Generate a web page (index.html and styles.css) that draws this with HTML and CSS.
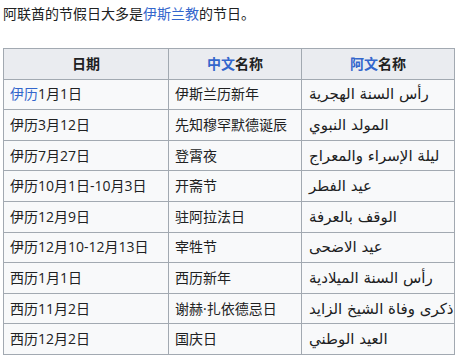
FILE: index.html
```html
<!DOCTYPE html>
<html lang="zh">
<head>
<meta charset="utf-8">
<title>阿联酋节假日</title>
<link rel="stylesheet" href="styles.css">
</head>
<body>
<p class="intro">阿联酋的节假日大多是<a href="#" class="link">伊斯兰教</a>的节日。</p>
<table class="holidays">
  <colgroup>
    <col class="c-date">
    <col class="c-zh">
    <col class="c-ar">
  </colgroup>
  <thead>
    <tr>
      <th>日期</th>
      <th><a href="#" class="link">中文</a>名称</th>
      <th><a href="#" class="link">阿文</a>名称</th>
    </tr>
  </thead>
  <tbody>
    <tr><td><a href="#" class="link">伊历</a>1月1日</td><td>伊斯兰历新年</td><td class="ar"><span class="ar-text" lang="ar" dir="rtl">رأس السنة الهجرية</span></td></tr>
    <tr><td>伊历3月12日</td><td>先知穆罕默德诞辰</td><td class="ar"><span class="ar-text" lang="ar" dir="rtl">المولد النبوي</span></td></tr>
    <tr><td>伊历7月27日</td><td>登霄夜</td><td class="ar"><span class="ar-text" lang="ar" dir="rtl">ليلة الإسراء والمعراج</span></td></tr>
    <tr><td>伊历10月1日-10月3日</td><td>开斋节</td><td class="ar"><span class="ar-text" lang="ar" dir="rtl">عيد الفطر</span></td></tr>
    <tr><td>伊历12月9日</td><td>驻阿拉法日</td><td class="ar"><span class="ar-text" lang="ar" dir="rtl">الوقف بالعرفة</span></td></tr>
    <tr><td>伊历12月10-12月13日</td><td>宰牲节</td><td class="ar"><span class="ar-text" lang="ar" dir="rtl">عيد الاضحى</span></td></tr>
    <tr><td>西历1月1日</td><td>西历新年</td><td class="ar"><span class="ar-text" lang="ar" dir="rtl">رأس السنة الميلادية</span></td></tr>
    <tr><td>西历11月2日</td><td>谢赫·扎依德忌日</td><td class="ar"><span class="ar-text" lang="ar" dir="rtl">ذكرى وفاة الشيخ الزايد</span></td></tr>
    <tr><td>西历12月2日</td><td>国庆日</td><td class="ar"><span class="ar-text" lang="ar" dir="rtl">العيد الوطني</span></td></tr>
  </tbody>
</table>
</body>
</html>
```

FILE: styles.css
```css
html, body {
  margin: 0;
  background: #ffffff;
}
body {
  padding: 3px 0 0 3px;
  font-family: "Open Sans", "Noto Sans CJK SC", "DejaVu Sans", sans-serif;
  font-size: 14px;
  color: #202122;
}
.intro {
  margin: 0;
  line-height: 22px;
}
.link {
  color: #3366cc;
  text-decoration: none;
}
.holidays {
  margin-top: 23px;
  border-collapse: collapse;
  table-layout: fixed;
  width: 451px;
  background: #f8f9fa;
  border: 1px solid #a2a9b1;
}
.c-date { width: 165px; }
.c-zh { width: 133px; }
.c-ar { width: 153px; }
.holidays th,
.holidays td {
  border: 1px solid #a2a9b1;
  padding: 3.8px 6px;
  line-height: 22px;
  white-space: nowrap;
  text-align: left;
}
.holidays th {
  background: #eaecf0;
  font-weight: bold;
  text-align: center;
}
.holidays td.ar {
  padding-left: 7px;
  padding-right: 2px;
  direction: ltr;
  text-align: left;
}
.ar-text {
  font-family: "DejaVu Sans", sans-serif;
  font-size: 15px;
  line-height: 22px;
}
```
